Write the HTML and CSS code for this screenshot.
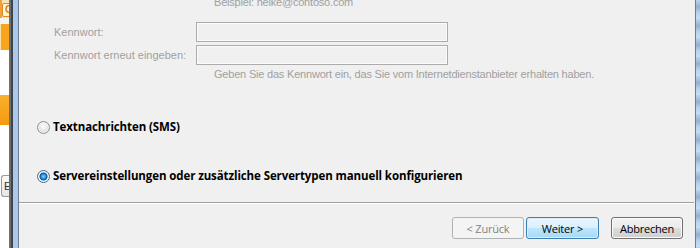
FILE: index.html
```html
<!DOCTYPE html>
<html lang="de">
<head>
    <meta charset="UTF-8">
    <title>Konto hinzufügen</title>
    <link rel="stylesheet" href="styles.css">
</head>
<body>
    <div class="app-strip">
        <div class="app-top"><span class="app-icon">O</span></div>
        <div class="app-gap"></div>
        <div class="app-orange"></div>
        <div class="app-white tall"></div>
        <div class="app-orange short"></div>
        <div class="app-white"></div>
        <div class="app-button">E</div>
        <div class="app-white fill"></div>
    </div>

    <div class="frame-left"></div>

    <div class="dialog">
        <div class="hint hint-top">Beispiel: heike@contoso.com</div>

        <div class="field-row first">
            <label class="field-label" for="pw1">Kennwort:</label>
            <input class="field-input" type="password" id="pw1" disabled>
        </div>
        <div class="field-row">
            <label class="field-label" for="pw2">Kennwort erneut eingeben:</label>
            <input class="field-input" type="password" id="pw2" disabled>
        </div>
        <div class="hint hint-isp">Geben Sie das Kennwort ein, das Sie vom Internetdienstanbieter erhalten haben.</div>

        <label class="option option-sms">
            <span class="radio"></span>
            Textnachrichten (SMS)
        </label>
        <label class="option option-manual">
            <span class="radio checked"></span>
            Servereinstellungen oder zusätzliche Servertypen manuell konfigurieren
        </label>

        <div class="separator"></div>

        <div class="buttons">
            <button class="btn" disabled>&lt; Zurück</button>
            <button class="btn btn-default">Weiter &gt;</button>
            <button class="btn btn-cancel">Abbrechen</button>
        </div>
    </div>

    <div class="frame-right"></div>
</body>
</html>
```

FILE: styles.css
```css
html, body {
    margin: 0;
    padding: 0;
}

body {
    width: 700px;
    height: 248px;
    overflow: hidden;
    display: flex;
    background: #f0f0f0;
}

/* the Outlook window peeking out on the left */
.app-strip {
    width: 9px;
    display: flex;
    flex-direction: column;
    background: #fff;
    overflow: hidden;
}

.app-top {
    height: 18px;
    background: linear-gradient(to right, #f0a040 0 2px, #fbe3b8 2px);
    position: relative;
}

.app-icon {
    position: absolute;
    left: 2px;
    top: 3px;
    width: 14px;
    height: 14px;
    box-sizing: border-box;
    border: 1px solid #e08a1a;
    border-radius: 2px;
    background: #fff7e6;
    color: #e07a00;
    font: bold 10px/12px "Liberation Sans", sans-serif;
    padding-left: 2px;
}

.app-gap {
    height: 6px;
    background: #f4f4f4;
}

.app-orange {
    height: 26px;
    background: linear-gradient(to right, #fde0b0 0 1px, #f8a51d 1px);
}

.app-orange.short {
    height: 30px;
    background: linear-gradient(to bottom, #f9b02e, #f59a10);
}

.app-white {
    height: 50px;
    background: #fff;
}

.app-white.tall {
    height: 45px;
}

.app-white.fill {
    flex: 1;
}

.app-button {
    height: 22px;
    margin-left: 1px;
    box-sizing: border-box;
    border: 1px solid #9a9a9a;
    border-right: none;
    border-radius: 3px 0 0 3px;
    background: linear-gradient(to bottom, #fafafa, #e6e6e6);
    font: 11px/20px "Liberation Sans", sans-serif;
    color: #333;
    padding-left: 2px;
}

/* dialog window frame */
.frame-left {
    width: 10px;
    background: linear-gradient(to right, #6e6e6e 0 2px, #3e454e 2px 4px, #abc9ea 4px 9px, #6f7c8b 9px 10px);
}

.frame-right {
    width: 5px;
    background:
        linear-gradient(to right, #6f7c8b 0 1px, transparent 1px),
        repeating-linear-gradient(to bottom, #b9d3ef 0, #95b0cf 7px, #b9d3ef 13px, #c6ddf4 19px);
}

.dialog {
    flex: 1;
    background: #f0f0f0;
    display: flex;
    flex-direction: column;
}

.hint {
    margin-left: 195px;
    font: 11px/13px "Liberation Sans", sans-serif;
    letter-spacing: -0.2px;
    color: #a0a0a0;
    white-space: nowrap;
}

.hint-top {
    margin-top: -4px;
}

.hint-isp {
    margin-top: 3px;
}

.field-row {
    display: flex;
    align-items: center;
    height: 20px;
    margin-top: 3px;
}

.field-row.first {
    margin-top: 13px;
}

.field-label {
    width: 142px;
    margin-left: 35px;
    font: 11px/13px "Liberation Sans", sans-serif;
    color: #a0a0a0;
    white-space: nowrap;
}

.field-input {
    width: 252px;
    height: 20px;
    box-sizing: border-box;
    margin: 0;
    border: 1px solid #acacac;
    box-shadow: inset 0 0 0 1px #fbfbfb;
    background: #f0f0f0;
}

.option {
    display: flex;
    align-items: center;
    height: 16px;
    margin-left: 18px;
    gap: 3px;
    font: bold 11.5px/16px "Open Sans", sans-serif;
    letter-spacing: -0.1px;
    color: #000;
    white-space: nowrap;
}

.option-sms {
    margin-top: 38px;
}

.option-manual {
    margin-top: 33px;
}

.radio {
    width: 13px;
    height: 13px;
    box-sizing: border-box;
    border-radius: 50%;
    border: 1px solid #8f8f8f;
    background: radial-gradient(circle at 50% 40%, #fdfdfd 0, #e9e9e9 45%, #cfcfcf 75%, #ececec 100%);
    box-shadow: inset 0 0 0 1px #f4f4f4;
    flex: none;
}

.radio.checked {
    border-color: #3c6f9c;
    background: radial-gradient(circle at 50% 50%, #7fd1f8 0, #1c8ad6 2.5px, #0f4f8f 3.5px, #dce8f3 4.5px, #f4f8fb 100%);
}

.separator {
    margin-top: 18px;
    margin-right: 1px;
    height: 0;
    border-top: 1px solid #a0a0a0;
    border-bottom: 1px solid #ffffff;
}

.buttons {
    display: flex;
    justify-content: flex-end;
    padding-top: 13px;
    padding-right: 12px;
    gap: 2px;
}

.btn {
    width: 72px;
    height: 22px;
    padding: 0;
    border: 1px solid #707070;
    border-radius: 3px;
    background: linear-gradient(to bottom, #f2f2f2 0, #ebebeb 50%, #dddddd 50%, #cfcfcf 100%);
    box-shadow: inset 0 0 0 1px #fcfcfc;
    font: 11px "Open Sans", sans-serif;
    letter-spacing: -0.2px;
    color: #000;
}

.btn:disabled {
    border-color: #adb2b5;
    background: #f4f4f4;
    box-shadow: none;
    color: #838383;
}

.btn-default {
    width: 73px;
    border-color: #3c7fb1;
    background: linear-gradient(to bottom, #eaf6fd 0, #d9f0fc 50%, #bee6fd 50%, #a7d9f5 100%);
    box-shadow: inset 0 0 0 1px #dcecf8;
}

.btn-cancel {
    margin-left: 10px;
}
```
